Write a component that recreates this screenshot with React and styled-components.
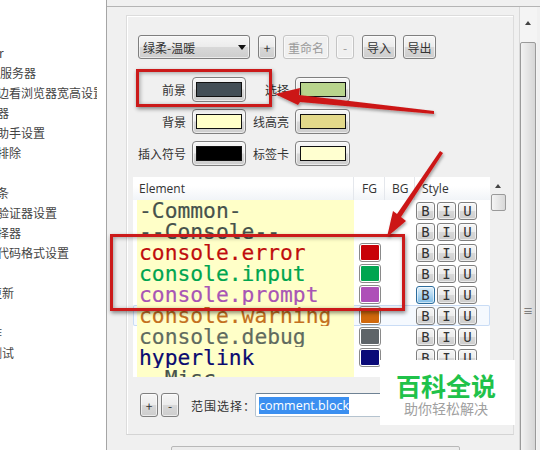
import styled, { createGlobalStyle, css } from 'styled-components';

const GlobalStyle = createGlobalStyle`
  html, body {
    margin: 0;
    padding: 0;
    background: #fff;
  }
`;

const Page = styled.div`
  position: relative;
  display: flex;
  width: 540px;
  height: 450px;
  overflow: hidden;
  font-family: "Noto Sans CJK SC", "Noto Sans", sans-serif;
  font-size: 12px;
  color: #333;
`;

const Sidebar = styled.div`
  width: 107px;
  flex: none;
  padding-top: 43px;
  box-sizing: border-box;
  background: #fff;
  border-right: 1px solid #a5a5a5;
  overflow: hidden;
`;

const NavItem = styled.div`
  height: 20px;
  line-height: 20px;
  width: 97px;
  overflow: hidden;
  white-space: nowrap;
  text-indent: ${(p) => p.$indent || 0}px;
  color: #444;
`;

const Main = styled.div`
  flex: 1;
  display: flex;
  flex-direction: column;
  background: #f0f0f0;
`;

const TopLine = styled.div`
  height: 6px;
  flex: none;
  border-bottom: 1px solid #b4b4b4;
  background: #f0f0f0;
`;

const Content = styled.div`
  flex: 1;
  display: flex;
  padding-left: 19px;
`;

const Group = styled.div`
  width: 388px;
  height: 420px;
  margin-top: 8px;
  box-sizing: border-box;
  padding: 19px 0 0 6px;
  border: 1px solid #dcdcdc;
  border-bottom-color: #d4d4d4;
  box-shadow: inset 1px 1px 0 #fff;
`;

const Toolbar = styled.div`
  display: flex;
  align-items: stretch;
  height: 24px;
  margin-left: 5px;
  gap: 7px;
`;

const buttonBase = css`
  box-sizing: border-box;
  display: flex;
  align-items: center;
  justify-content: center;
  border: 1px solid #7f7f7f;
  border-radius: 3px;
  background: linear-gradient(#f6f6f6 0%, #ececec 48%, #d8d8d8 52%, #cdcdcd 100%);
  box-shadow: inset 0 0 0 1px rgba(255, 255, 255, 0.6);
  color: #333;
`;

const Select = styled.div`
  ${buttonBase}
  width: 112px;
  justify-content: space-between;
  padding: 0 3px 0 4px;
  font-size: 12px;
`;

const Caret = styled.span`
  width: 0;
  height: 0;
  border-left: 4px solid transparent;
  border-right: 4px solid transparent;
  border-top: 5px solid #111;
`;

const ToolButton = styled.div`
  ${buttonBase}
  width: ${(p) => p.$w}px;
  margin-left: ${(p) => p.$ml || 0}px;
  ${(p) =>
    p.$disabled &&
    css`
      background: #f0f0f0;
      border-color: #c4c4c4;
      color: #9a9a9a;
    `}
`;

const ColorGrid = styled.div`
  display: grid;
  grid-template-columns: 53px 54px 37px 55px;
  grid-auto-rows: 25px;
  column-gap: 6px;
  row-gap: 7px;
  margin-top: 18px;
  align-items: center;
`;

const ColorLabel = styled.div`
  text-align: right;
  white-space: nowrap;
`;

const Swatch = styled.div`
  ${buttonBase}
  height: 25px;
  border-radius: 4px;
`;

const SwatchFill = styled.div`
  width: 44px;
  height: 13px;
  border: 1px solid #111;
  background: ${(p) => p.$color};
`;

const TableWrap = styled.div`
  display: flex;
  margin-top: 11px;
`;

const Table = styled.div`
  width: 357px;
  background: #fff;
`;

const HeaderRow = styled.div`
  display: grid;
  grid-template-columns: 221px 31px 30px 75px;
  height: 23px;
  background: linear-gradient(#fff 40%, #f1f4f8);
`;

const HeaderCell = styled.div`
  line-height: 23px;
  padding-left: ${(p) => p.$pad || 6}px;
  border-right: ${(p) => (p.$last ? 'none' : '1px solid #e4e7ec')};
  font-family: "Open Sans", sans-serif;
  font-size: 12px;
  color: #333;
`;

const Rows = styled.div`
  height: 177px;
  overflow: hidden;
`;

const Row = styled.div`
  display: grid;
  grid-template-columns: 221px 31px 30px 75px;
  height: 21px;
  box-sizing: border-box;
  ${(p) =>
    p.$hover &&
    css`
      background: #f5f9fe;
      box-shadow: inset 0 0 0 1px #c9dcf5;
      border-radius: 2px;
    `}
`;

const NameCell = styled.div`
  margin-left: 4px;
  padding-left: 2px;
  background: #ffffc8;
  font-family: "DejaVu Sans Mono", monospace;
  font-size: 21.3px;
  line-height: 21px;
  white-space: nowrap;
  overflow: hidden;
  color: ${(p) => p.$color};
  -webkit-text-stroke: 0.2px ${(p) => p.$color};
`;

const FgCell = styled.div`
  display: flex;
  justify-content: center;
  align-items: center;
`;

const ColorChip = styled.div`
  width: 18px;
  height: 15px;
  border: 1px solid #fff;
  outline: 1px solid #8a8a8a;
  border-radius: 2px;
  background: ${(p) => p.$color};
`;

const BgCell = styled.div``;

const StyleCell = styled.div`
  display: flex;
  gap: 2px;
  padding: 2px 0 0 1px;
`;

const StyleButton = styled.div`
  ${buttonBase}
  width: 19px;
  height: 18px;
  font-family: "DejaVu Sans Mono", monospace;
  font-size: 14px;
  ${(p) =>
    p.$on &&
    css`
      background: linear-gradient(#dff0fb, #7fbce6);
      border-color: #2c6c9c;
    `}
`;

const TableScroll = styled.div`
  position: relative;
  width: 17px;
  background: #f0f0f0;
`;

const SmallUp = styled.span`
  position: absolute;
  left: 5px;
  top: ${(p) => p.$top}px;
  width: 0;
  height: 0;
  border-left: 3px solid transparent;
  border-right: 3px solid transparent;
  border-bottom: 4px solid #444;
`;

const TableThumb = styled.div`
  position: absolute;
  left: 1px;
  top: 17px;
  width: 13px;
  height: 15px;
  border: 1px solid #9a9a9a;
  border-radius: 2px;
  background: linear-gradient(90deg, #f4f4f4, #d8d8d8);
`;

const BottomRow = styled.div`
  display: flex;
  align-items: center;
  height: 24px;
  margin-top: 16px;
  margin-left: 7px;
`;

const SmallButton = styled.div`
  ${buttonBase}
  width: 18px;
  height: 24px;
  margin-right: 3px;
`;

const RangeLabel = styled.div`
  margin-left: 9px;
  width: 64px;
  white-space: nowrap;
  letter-spacing: 1px;
`;

const RangeInput = styled.div`
  box-sizing: border-box;
  width: 200px;
  height: 24px;
  padding: 3px 0 0 3px;
  background: #fff;
  border: 1px solid #b5c3cf;
  border-top-color: #6e8294;
  border-radius: 2px;
  font-family: "Open Sans", sans-serif;
  font-size: 12.5px;
  line-height: 17px;
`;

const Selected = styled.span`
  background: #3b8ff0;
  color: #fff;
`;

const MainScroll = styled.div`
  position: relative;
  width: 17px;
  margin-left: 5px;
  background: #f4f4f4;
  border-left: 1px solid #d8d8d8;
`;

const MainThumb = styled.div`
  position: absolute;
  left: 0;
  top: 35px;
  bottom: -2px;
  width: 16px;
  box-sizing: border-box;
  display: flex;
  align-items: center;
  justify-content: center;
  padding-top: 126px;
  border: 1px solid #9a9a9a;
  border-radius: 2px;
  background: linear-gradient(90deg, #f2f2f2, #d6d6d6);
  color: #666;
  font-size: 10px;
`;

const BottomEdge = styled.div`
  position: absolute;
  left: 171px;
  top: 446px;
  width: 287px;
  height: 6px;
  border: 1px solid #b8b8b8;
  border-radius: 2px;
  background: #ececec;
`;

const RedBox = styled.div`
  position: absolute;
  left: ${(p) => p.$x}px;
  top: ${(p) => p.$y}px;
  width: ${(p) => p.$w}px;
  height: ${(p) => p.$h}px;
  box-sizing: border-box;
  border: 3px solid #cb1a1a;
  box-shadow: 1px 2px 4px rgba(0, 0, 0, 0.45), inset 1px 1px 4px rgba(0, 0, 0, 0.35);
`;

const Arrows = styled.svg`
  position: absolute;
  left: 0;
  top: 0;
`;

const Watermark = styled.div`
  position: absolute;
  left: 380px;
  top: 360px;
  width: 135px;
  height: 65px;
  background: #fff;
  display: flex;
  flex-direction: column;
  align-items: center;
  padding: 11px 3px 0 0;
  box-sizing: border-box;
`;

const WatermarkTitle = styled.div`
  font-size: 25px;
  line-height: 28px;
  font-weight: 700;
  color: #1fc24a;
`;

const WatermarkSub = styled.div`
  font-size: 14px;
  line-height: 18px;
  color: #a0a0a0;
`;

const nav = [
  ['r', -1], ['服务器', 0], ['边看浏览器宽高设置', -3], ['器', -3], ['助手设置', -3],
  ['排除', -3], ['', 0], ['条', -3], ['验证器设置', -3], ['择器', -3],
  ['代码格式设置', -3], ['', 0], ['更新', -10], ['', 0], ['作', -10], ['测试', -10],
];

const elements = [
  { name: '-Common-', color: '#46524c' },
  { name: '--Console--', color: '#46524c' },
  { name: 'console.error', color: '#c00d0d', fg: '#c80008' },
  { name: 'console.input', color: '#00a550', fg: '#00a550' },
  { name: 'console.prompt', color: '#a855b5', fg: '#ae4fb8', bold: true },
  { name: 'console.warning', color: '#c4701e', fg: '#d0680c', hover: true },
  { name: 'console.debug', color: '#5f6b60', fg: '#5e6468' },
  { name: 'hyperlink', color: '#0a0a70', fg: '#0a0a78' },
  { name: '--Misc--', color: '#46524c', noStyle: true },
];

export default function App() {
  return (
    <Page>
      <GlobalStyle />
      <Sidebar>
        {nav.map(([text, indent], i) => (
          <NavItem key={i} $indent={indent}>{text}</NavItem>
        ))}
      </Sidebar>

      <Main>
        <TopLine />
        <Content>
          <Group>
            <Toolbar>
              <Select>绿柔-温暖<Caret /></Select>
              <ToolButton $w={18} $ml={1}>+</ToolButton>
              <ToolButton $w={46} $disabled>重命名</ToolButton>
              <ToolButton $w={18} $disabled>-</ToolButton>
              <ToolButton $w={34} $ml={1}>导入</ToolButton>
              <ToolButton $w={33}>导出</ToolButton>
            </Toolbar>

            <ColorGrid>
              <ColorLabel>前景</ColorLabel>
              <Swatch><SwatchFill $color="#434e56" /></Swatch>
              <ColorLabel>选择</ColorLabel>
              <Swatch><SwatchFill $color="#b8d48c" /></Swatch>
              <ColorLabel>背景</ColorLabel>
              <Swatch><SwatchFill $color="#ffffc8" /></Swatch>
              <ColorLabel>线高亮</ColorLabel>
              <Swatch><SwatchFill $color="#e3d98a" /></Swatch>
              <ColorLabel>插入符号</ColorLabel>
              <Swatch><SwatchFill $color="#000" /></Swatch>
              <ColorLabel>标签卡</ColorLabel>
              <Swatch><SwatchFill $color="#ffffd0" /></Swatch>
            </ColorGrid>

            <TableWrap>
              <Table>
                <HeaderRow>
                  <HeaderCell>Element</HeaderCell>
                  <HeaderCell $pad={8}>FG</HeaderCell>
                  <HeaderCell $pad={7}>BG</HeaderCell>
                  <HeaderCell $last $pad={7}>Style</HeaderCell>
                </HeaderRow>
                <Rows>
                  {elements.map((el) => (
                    <Row key={el.name} $hover={el.hover}>
                      <NameCell $color={el.color}>{el.name}</NameCell>
                      <FgCell>{el.fg && <ColorChip $color={el.fg} />}</FgCell>
                      <BgCell />
                      <StyleCell>
                        {!el.noStyle && (
                          <>
                            <StyleButton $on={el.bold}>B</StyleButton>
                            <StyleButton>I</StyleButton>
                            <StyleButton>U</StyleButton>
                          </>
                        )}
                      </StyleCell>
                    </Row>
                  ))}
                </Rows>
              </Table>
              <TableScroll>
                <SmallUp $top={7} />
                <TableThumb />
              </TableScroll>
            </TableWrap>

            <BottomRow>
              <SmallButton>+</SmallButton>
              <SmallButton>-</SmallButton>
              <RangeLabel>范围选择：</RangeLabel>
              <RangeInput><Selected>comment.block</Selected></RangeInput>
            </BottomRow>
          </Group>

          <MainScroll>
            <SmallUp $top={14} />
            <MainThumb>≡</MainThumb>
          </MainScroll>
        </Content>
      </Main>

      <BottomEdge />

      <RedBox $x={136} $y={69} $w={136} $h={38} />
      <RedBox $x={110} $y={234} $w={295} $h={77} />

      <Arrows width="540" height="450" viewBox="0 0 540 450">
        <defs>
          <filter id="shadow" x="-10%" y="-10%" width="120%" height="130%">
            <feDropShadow dx="1" dy="2" stdDeviation="1.5" floodColor="#000" floodOpacity="0.35" />
          </filter>
        </defs>
        <g fill="#cc1717" filter="url(#shadow)">
          <polygon points="434,111 434,114 300,102 298,105 275,94 300,88 299,95" />
          <polygon points="440,151 443,153 401,217 406,221 387,237 393,211 397,214" />
        </g>
      </Arrows>

      <Watermark>
        <WatermarkTitle>百科全说</WatermarkTitle>
        <WatermarkSub>助你轻松解决</WatermarkSub>
      </Watermark>
    </Page>
  );
}
